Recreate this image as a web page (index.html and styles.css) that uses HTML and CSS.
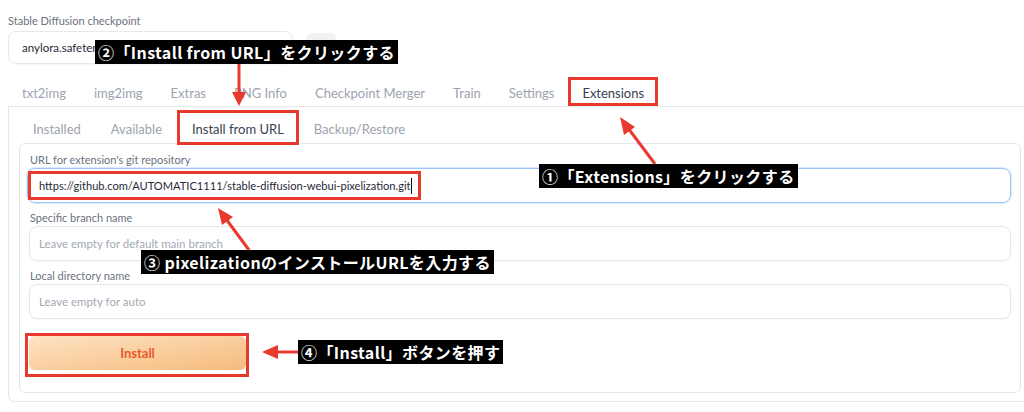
FILE: index.html
```
<!DOCTYPE html>
<html lang="ja">
<head>
  <meta charset="UTF-8" />
  <title>Extensions - Install from URL</title>
  <link rel="stylesheet" href="styles.css">
</head>
<body>

<div class="page">

  <div class="top">
    <div class="label">Stable Diffusion checkpoint</div>
    <div class="ckpt-row">
      <div class="select">anylora.safeten</div>
      <div class="refresh"></div>
    </div>
  </div>

  <div class="tabs">
    <span class="tab">txt2img</span>
    <span class="tab">img2img</span>
    <span class="tab">Extras</span>
    <span class="tab">PNG Info</span>
    <span class="tab">Checkpoint Merger</span>
    <span class="tab">Train</span>
    <span class="tab">Settings</span>
    <span class="tab active mark">Extensions</span>
  </div>

  <div class="outer">
    <div class="subtabs">
      <span class="subtab">Installed</span>
      <span class="subtab">Available</span>
      <span class="subtab active mark">Install from URL</span>
      <span class="subtab">Backup/Restore</span>
    </div>

    <div class="panel">
      <div class="field">
        <div class="field-label">URL for extension's git repository</div>
        <div class="input focus"><span class="url mark">https://github.com/AUTOMATIC1111/stable-diffusion-webui-pixelization.git</span><span class="caret"></span></div>
      </div>
      <div class="field">
        <div class="field-label">Specific branch name</div>
        <div class="input placeholder">Leave empty for default main branch</div>
      </div>
      <div class="field">
        <div class="field-label">Local directory name</div>
        <div class="input placeholder">Leave empty for auto</div>
      </div>
      <div class="install-mark">
        <button class="install">Install</button>
      </div>
    </div>
  </div>

</div>

<!-- annotations -->
<svg class="arrows" width="1024" height="412" viewBox="0 0 1024 412">
  <g fill="#e8392f" stroke="#e8392f">
    <line x1="239" y1="64" x2="239" y2="94" stroke-width="3" />
    <polygon points="232,92 246,92 239,106" stroke="none" />

    <line x1="655" y1="164" x2="628" y2="128" stroke-width="3" />
    <polygon points="620,117 624,135 635,127" stroke="none" />

    <line x1="249" y1="250" x2="226" y2="219" stroke-width="3" />
    <polygon points="218,208 222,225 233,217" stroke="none" />

    <line x1="298" y1="352" x2="276" y2="352" stroke-width="3" />
    <polygon points="262,352 278,345 278,359" stroke="none" />
  </g>
</svg>

<div class="note n1">①「Extensions」をクリックする</div>
<div class="note n2">②「Install from URL」をクリックする</div>
<div class="note n3">③ pixelizationのインストールURLを入力する</div>
<div class="note n4">④「Install」ボタンを押す</div>

</body>
</html>
```

FILE: styles.css
```
body {
  margin: 0;
  background: #fff;
  font-family: Lato, "Noto Sans", sans-serif;
  color: #374151;
  position: relative;
  width: 1024px;
  height: 412px;
  overflow: hidden;
}
.page {
  padding-left: 8px;
}
.top {
  padding-top: 14px;
}
.label {
  font-size: 11px;
  line-height: 14px;
  color: #6b7280;
}
.ckpt-row {
  display: flex;
  align-items: flex-start;
  gap: 13px;
  margin-top: 3px;
}
.select {
  width: 270px;
  height: 31px;
  padding-left: 13px;
  border: 1px solid #e8e9ec;
  border-radius: 8px;
  font-size: 11.5px;
  line-height: 31px;
  color: #1f2937;
  box-shadow: 0 1px 2px rgba(0,0,0,0.04);
}
.refresh {
  width: 30px;
  height: 23px;
  margin-top: 2px;
  border-radius: 6px;
  background: #f1f2f4;
}
.tabs {
  display: flex;
  margin-top: 13px;
  border-bottom: 1px solid #e5e7eb;
}
.tab {
  padding: 0 14px;
  height: 29px;
  line-height: 33px;
  font-size: 13px;
  color: #9ca3af;
}
.tab.active {
  color: #374151;
}
.mark {
  outline: 3px solid #e8392f;
  outline-offset: -3px;
}
.outer {
  border-left: 1px solid #e5e7eb;
  border-bottom: 1px solid #e5e7eb;
  border-bottom-left-radius: 6px;
  padding: 5px 0 8px 10px;
}
.subtabs {
  display: flex;
  padding-left: 1px;
}
.subtab {
  padding: 0 17px 0 13px;
  height: 31px;
  line-height: 35px;
  font-size: 13px;
  color: #9ca3af;
}
.subtab.active {
  color: #374151;
  padding: 0 13px 0 13px;
  margin: 0 4px 0 0;
  outline-offset: -1px;
  position: relative;
  z-index: 1;
}
.panel {
  margin-right: 3px;
  border: 1px solid #e5e7eb;
  border-radius: 6px;
  padding: 9px 9px 15px 9px;
}
.field {
  margin-bottom: 8px;
}
.field-label {
  font-size: 11px;
  line-height: 14px;
  color: #6b7280;
  margin-bottom: 1px;
  padding-left: 1px;
}
.input {
  height: 33px;
  border: 1px solid #e5e7eb;
  border-radius: 8px;
  padding-left: 9px;
  font-size: 11.5px;
  line-height: 33px;
  color: #1f2937;
  box-shadow: 0 1px 2px rgba(0,0,0,0.04);
  display: flex;
  align-items: center;
}
.input.focus {
  border-color: #9cc3f5;
  box-shadow: 0 0 0 1px #dbeafe;
  margin-left: -2px;
  padding-left: 11px;
  font-size: 11.1px;
}
.input.placeholder {
  color: #a3a9b3;
}
.url {
  display: inline-block;
  line-height: 14px;
  padding: 5px 7px 4px 8px;
  margin: -5px -7px -4px -8px;
  outline-offset: 0;
}
.caret {
  display: inline-block;
  width: 1px;
  height: 16px;
  background: #111;
  margin-left: 0;
}
.install-mark {
  display: inline-block;
  border: 3px solid #e8392f;
  padding: 0 0 4px 1px;
  margin: 6px 0 0 -4px;
}
.install {
  display: block;
  width: 217px;
  height: 34px;
  border: none;
  border-radius: 6px;
  background: linear-gradient(to bottom right, #fde3c4, #f6bb7c);
  color: #ea5a2c;
  font-family: Lato, "Noto Sans", sans-serif;
  font-weight: 700;
  font-size: 13px;
}
.arrows {
  position: absolute;
  left: 0;
  top: 0;
  pointer-events: none;
}
.note {
  position: absolute;
  background: #000;
  color: #fff;
  font-family: "Noto Sans CJK JP", sans-serif;
  font-weight: 700;
  font-size: 16px;
  letter-spacing: 0.4px;
  line-height: 24px;
  padding: 0 3px;
  white-space: nowrap;
}
.n1 { left: 539px; top: 164px; }
.n2 { left: 95px; top: 40px; }
.n3 { left: 141px; top: 250px; }
.n4 { left: 298px; top: 340px; }
```
